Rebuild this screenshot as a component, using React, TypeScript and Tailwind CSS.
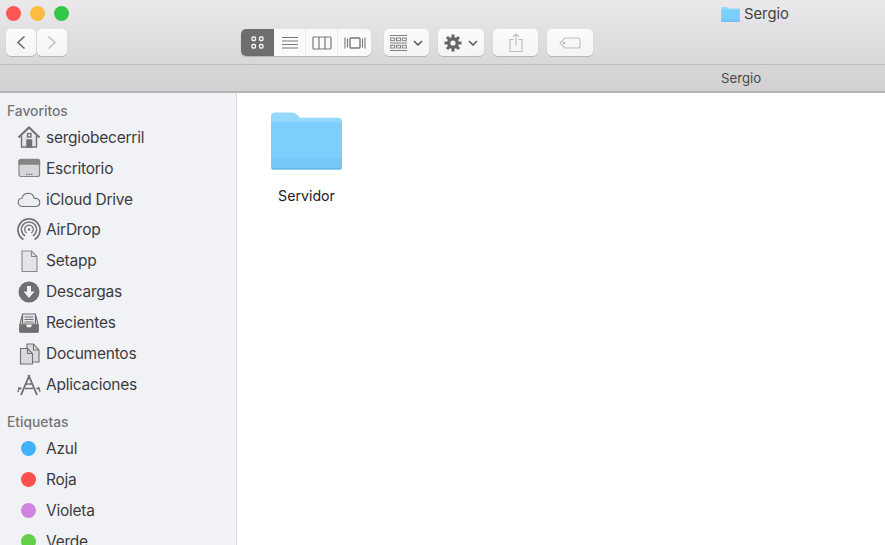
import type { ReactNode } from "react";

const iconColor = "#707072";

function FolderIcon({ className }: { className: string }) {
  return (
    <svg viewBox="0 0 72 58" className={className}>
      <path d="M0 4a4 4 0 0 1 4-4h17c3 0 4 1 6 3l2.500 2.500H68a4 4 0 0 1 4 4V20H0z" fill="#94d8fc" />
      <path d="M0 10h72v45a3 3 0 0 1-3 3H3a3 3 0 0 1-3-3z" fill="#7ccffd" />
      <rect x="0" y="46" width="72" height="10" fill="#75c9f8" />
      <path d="M0 56h72a3 3 0 0 1-3 2H3a3 3 0 0 1-3-2z" fill="#66b9e8" />
    </svg>
  );
}

function Glyph({ children }: { children: ReactNode }) {
  return (
    <svg viewBox="0 0 24 24" className="h-6 w-6 shrink-0" fill="none" stroke={iconColor} strokeWidth="1.4">
      {children}
    </svg>
  );
}

const places: { name: string; icon: ReactNode }[] = [
  {
    name: "sergiobecerril",
    icon: (
      <Glyph>
        <path d="M1.500 12.500 12 2.500l10.500 10" strokeWidth="2" />
        <path d="M4.500 10.500V22h15V10.500" fill="#e4e5e8" />
        <rect x="10" y="15" width="4.500" height="7" fill={iconColor} />
        <rect x="10.500" y="8.500" width="3.500" height="3.500" />
      </Glyph>
    ),
  },
  {
    name: "Escritorio",
    icon: (
      <Glyph>
        <rect x="2" y="3.500" width="20.500" height="17" rx="2" fill="#d6d7da" stroke="#858587" strokeWidth="1.200" />
        <path d="M2 8V5.500a2 2 0 0 1 2-2h16.500a2 2 0 0 1 2 2V8z" fill="#858587" stroke="#858587" />
        <path d="M9 18.300h1.400M11.500 18.300h1.400M14 18.300h1.400" strokeWidth="1.300" />
      </Glyph>
    ),
  },
  {
    name: "iCloud Drive",
    icon: (
      <Glyph>
        <path d="M6 19.500c-3 0-4.800-2-4.800-4.200 0-2.100 1.500-3.800 3.700-4 .9-3.300 3.600-5 6.200-5 3 0 5.400 2 6 4.800 3 .1 5.700 1.700 5.700 4.300 0 2.400-2 4.100-4.600 4.100z" fill="#eceef1" strokeWidth="1.100" />
      </Glyph>
    ),
  },
  {
    name: "AirDrop",
    icon: (
      <Glyph>
        <path d="M6.500 21.500a11 11 0 1 1 11 0" strokeWidth="1.700" />
        <path d="M8 18a7.600 7.600 0 1 1 8 0" strokeWidth="1.500" />
        <path d="M9.700 15a4.300 4.300 0 1 1 4.600 0" strokeWidth="1.300" />
        <circle cx="12" cy="11.500" r="1.200" fill={iconColor} stroke="none" />
      </Glyph>
    ),
  },
  {
    name: "Setapp",
    icon: (
      <Glyph>
        <path d="M5 2h9.500L20 7.500V22.500H5z" fill="#e3e4e7" stroke="#8a8a8c" strokeWidth="1.100" />
        <path d="M14.500 2v5.500H20" stroke="#8a8a8c" strokeWidth="1.100" />
      </Glyph>
    ),
  },
  {
    name: "Descargas",
    icon: (
      <Glyph>
        <circle cx="12" cy="12" r="10.500" fill={iconColor} stroke="none" />
        <path d="M10 6h4v5.500h3.500L12 18l-5.500-6.500H10z" fill="#f1f2f6" stroke="none" />
      </Glyph>
    ),
  },
  {
    name: "Recientes",
    icon: (
      <Glyph>
        <path d="M5.500 3h13v10h-13z" fill="#e6e7ea" strokeWidth="1.200" />
        <path d="M7.500 6h9M7.500 8.500h9M7.500 11h9" strokeWidth="1" />
        <path d="M5 5 3 14v7h18v-7l-2-9" strokeWidth="1.200" />
        <path d="M3 14h5.500l1 3h5l1-3H21v6a1 1 0 0 1-1 1H4a1 1 0 0 1-1-1z" fill={iconColor} />
      </Glyph>
    ),
  },
  {
    name: "Documentos",
    icon: (
      <Glyph>
        <path d="M10 2h6.500l5.500 6v12H10z" fill="#d9dadd" strokeWidth="1.100" />
        <path d="M16.500 2v6H22" strokeWidth="1.100" />
        <path d="M3.500 6.500h7l5 5V22h-12z" fill="#d9dadd" strokeWidth="1.100" />
        <path d="M10.500 6.500v5h5" strokeWidth="1.100" />
      </Glyph>
    ),
  },
  {
    name: "Aplicaciones",
    icon: (
      <Glyph>
        <path d="M11.500 2 20 22M12.500 2 4 22" strokeWidth="1.900" />
        <path d="M1 15.500h3.500M19.500 15.500H23M8 15.500h8M8.500 11h7M3 14 .8 19M21 14l2.200 5" strokeWidth="1.300" />
      </Glyph>
    ),
  },
];

const tags = [
  { name: "Azul", color: "bg-[#3fb1fd]" },
  { name: "Roja", color: "bg-[#fd4f4b]" },
  { name: "Violeta", color: "bg-[#cf84e2]" },
  { name: "Verde", color: "bg-[#63ce47]" },
];

function SidebarRow({ icon, name }: { icon: ReactNode; name: string }) {
  return (
    <div className="flex h-[30.900px] shrink-0 items-center gap-[5.500px] pl-[16.500px]">
      {icon}
      <span className="text-[15.500px] tracking-[-0.015em] text-[#3c3c3e]">{name}</span>
    </div>
  );
}

function ToolButton({ className, children }: { className: string; children: ReactNode }) {
  return (
    <div className={`flex h-[27px] items-center justify-center rounded-[5px] bg-gradient-to-b from-[#fcfcfc] to-[#f4f4f4] shadow-[0_1px_1px_rgba(0,0,0,0.18)] ${className}`}>
      {children}
    </div>
  );
}

export default function App() {
  return (
    <div className="flex h-[545px] w-[885px] flex-col overflow-hidden bg-white font-['Inter',sans-serif]">
      <div className="h-[65px] shrink-0 border-b border-[#bdbcbd] bg-gradient-to-b from-[#ebe9eb] to-[#d9d7d9]">
        <div className="flex h-[29px] items-center pl-[6px]">
          <div className="flex gap-[9px] pb-[3px]">
            <span className="h-[15px] w-[15px] rounded-full bg-[#fc5753]" />
            <span className="h-[15px] w-[15px] rounded-full bg-[#fdbc40]" />
            <span className="h-[15px] w-[15px] rounded-full bg-[#33c748]" />
          </div>
          <div className="ml-[652px] flex items-center gap-[4px]">
            <FolderIcon className="h-[15px] w-[19px]" />
            <span className="text-[14.800px] text-[#444]">Sergio</span>
          </div>
        </div>
        <div className="flex items-start pl-[6px]">
          <ToolButton className="w-[30px]">
            <svg viewBox="0 0 10 15" className="h-[15px] w-[10px]" fill="none" stroke="#6a6a6a" strokeWidth="1.600"><path d="M8.500 1.500 2 7.500l6.500 6" /></svg>
          </ToolButton>
          <ToolButton className="ml-px w-[30px]">
            <svg viewBox="0 0 10 15" className="h-[15px] w-[10px]" fill="none" stroke="#c2c2c2" strokeWidth="1.600"><path d="m1.500 1.500 6.500 6-6.500 6" /></svg>
          </ToolButton>

          <div className="ml-[174px] flex h-[27px] w-[130px] overflow-hidden rounded-[5px] bg-[#fafafa] shadow-[0_1px_1px_rgba(0,0,0,0.18)]">
            <div className="flex w-[33px] items-center justify-center bg-[#6e6e6e]">
              <svg viewBox="0 0 13 13" className="h-[13px] w-[13px]" fill="none" stroke="#f4f4f4" strokeWidth="1.300">
                <rect x="1" y="1" width="3.500" height="3.500" rx="1" /><rect x="8.500" y="1" width="3.500" height="3.500" rx="1" />
                <rect x="1" y="8.500" width="3.500" height="3.500" rx="1" /><rect x="8.500" y="8.500" width="3.500" height="3.500" rx="1" />
              </svg>
            </div>
            <div className="flex w-[32px] items-center justify-center border-r border-[#ececec]">
              <svg viewBox="0 0 18 14" className="h-[14px] w-[18px]" stroke="#777" strokeWidth="1.100"><path d="M1 1.500h16M1 5h16M1 8.500h16M1 12h16" /></svg>
            </div>
            <div className="flex w-[32px] items-center justify-center border-r border-[#ececec]">
              <svg viewBox="0 0 20 14" className="h-[14px] w-5" fill="none" stroke="#777" strokeWidth="1.200"><rect x="1" y="1" width="18" height="12" rx="1" /><path d="M7 1v12M13 1v12" /></svg>
            </div>
            <div className="flex flex-1 items-center justify-center">
              <svg viewBox="0 0 22 14" className="h-[14px] w-[22px]" fill="none" stroke="#777" strokeWidth="1.100"><rect x="6" y="2" width="10" height="10" rx="1" strokeWidth="1.400" /><path d="M1 1.500v11M3.500 2.500v9M18.500 2.500v9M21 1.500v11" /></svg>
            </div>
          </div>

          <ToolButton className="ml-[13px] w-[45px] gap-[6px]">
            <svg viewBox="0 0 17 16" className="h-4 w-[17px]" fill="none" stroke="#808080" strokeWidth="1"><path d="M0 .5h17M0 8h17M0 15.500h17" /><rect x=".7" y="3" width="4" height="2.700" /><rect x="6.500" y="3" width="4" height="2.700" /><rect x="12.300" y="3" width="4" height="2.700" /><rect x=".7" y="10.300" width="4" height="2.700" /><rect x="6.500" y="10.300" width="4" height="2.700" /><rect x="12.300" y="10.300" width="4" height="2.700" /></svg>
            <svg viewBox="0 0 10 6" className="h-[6px] w-[10px]" fill="none" stroke="#555" strokeWidth="1.500"><path d="m1 1 4 4 4-4" /></svg>
          </ToolButton>

          <ToolButton className="ml-[9px] w-[46px] gap-[6px]">
            <svg viewBox="0 0 18 18" className="h-[18px] w-[18px]" fill="none" stroke="#666">
              <circle cx="9" cy="9" r="4.300" strokeWidth="3.400" />
              <path d="M9 .5v3.500M9 14v3.500M.5 9H4M14 9h3.500M3 3l2.500 2.500M12.500 12.500 15 15M15 3l-2.500 2.500M5.500 12.500 3 15" strokeWidth="3" />
            </svg>
            <svg viewBox="0 0 10 6" className="h-[6px] w-[10px]" fill="none" stroke="#555" strokeWidth="1.500"><path d="m1 1 4 4 4-4" /></svg>
          </ToolButton>

          <ToolButton className="ml-[9px] w-[45px]">
            <svg viewBox="0 0 14 19" className="h-[19px] w-[14px]" fill="none" stroke="#bcbcbc" strokeWidth="1.100"><path d="M4.500 6.500H1v12h12v-12H9.500M7 12.500V1M4 3.800 7 1l3 2.800" /></svg>
          </ToolButton>

          <ToolButton className="ml-[9px] w-[46px]">
            <svg viewBox="0 0 22 12" className="h-3 w-[22px]" fill="none" stroke="#bcbcbc" strokeWidth="1.100"><path d="M6 1h13a2 2 0 0 1 2 2v6a2 2 0 0 1-2 2H6L1 6z" /><circle cx="5" cy="6" r=".7" /></svg>
          </ToolButton>
        </div>
      </div>

      <div className="flex h-[28px] shrink-0 items-center border-b-2 border-[#b4b3b4] bg-gradient-to-b from-[#d8d6d8] to-[#d2d0d2] pl-[721px] pt-[1.500px]">
        <span className="text-[13.200px] text-[#4a4a4a]">Sergio</span>
      </div>

      <div className="flex min-h-0 flex-1">
        <aside className="flex w-[237px] shrink-0 flex-col overflow-hidden border-r border-[#dcdcde] bg-[#f1f2f6] pt-[8px]">
          <div className="h-[20px] pl-[7px] text-[13.800px] font-medium leading-[20px] text-[#757577]">Favoritos</div>
          <div className="flex flex-col pt-[1px]">
            {places.map((p) => (
              <SidebarRow key={p.name} icon={p.icon} name={p.name} />
            ))}
          </div>
          <div className="mt-[12px] h-[20px] pl-[7px] text-[13.800px] font-medium leading-[20px] text-[#757577]">Etiquetas</div>
          <div className="flex flex-col pt-[1px]">
            {tags.map((t) => (
              <SidebarRow
                key={t.name}
                name={t.name}
                icon={
                  <span className="flex h-6 w-6 shrink-0 items-center justify-center">
                    <span className={`h-[15px] w-[15px] rounded-full ${t.color}`} />
                  </span>
                }
              />
            ))}
          </div>
        </aside>

        <main className="flex-1 bg-white pl-[34px] pt-[19px]">
          <div className="flex w-[71px] flex-col items-center">
            <FolderIcon className="h-[58px] w-[71px]" />
            <span className="mt-[15px] text-[14.200px] text-[#222]">Servidor</span>
          </div>
        </main>
      </div>
    </div>
  );
}
